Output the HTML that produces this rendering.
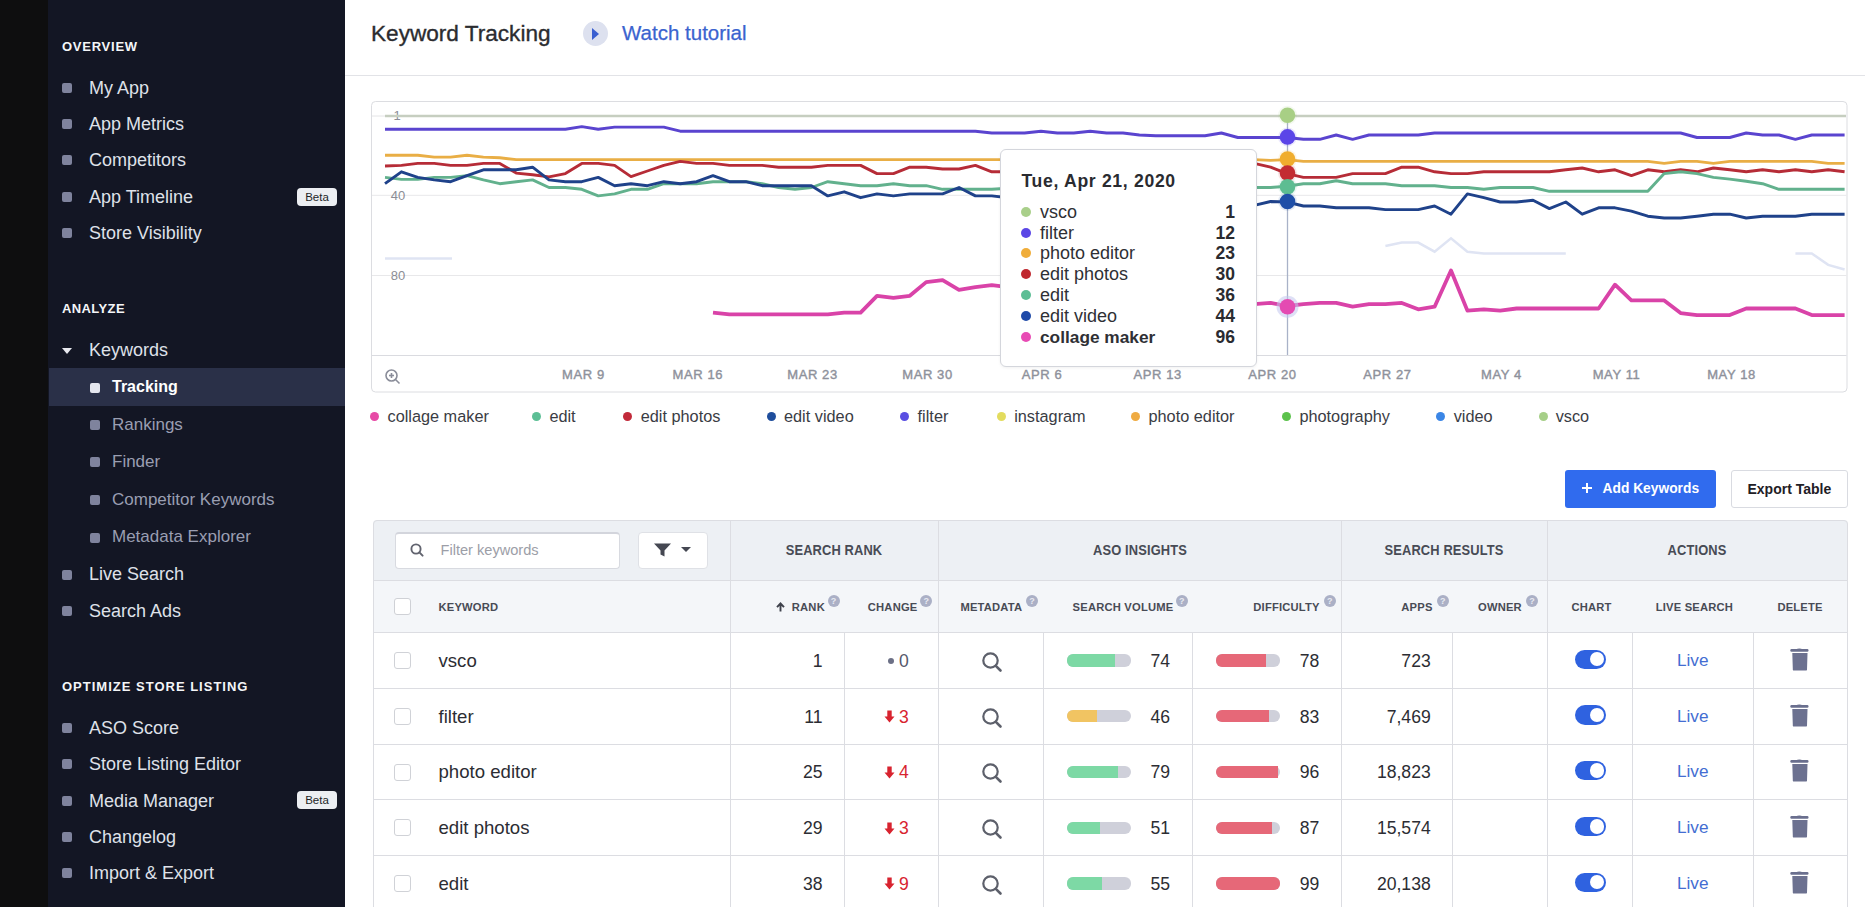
<!DOCTYPE html>
<html><head><meta charset="utf-8">
<style>
*{box-sizing:border-box;margin:0;padding:0}
html,body{width:1865px;height:907px;overflow:hidden;background:#fff;font-family:"Liberation Sans",sans-serif;position:relative}
.a{position:absolute;white-space:nowrap}
.sb0{left:0;top:0;width:48px;height:907px;background:#0e0e0f}
.sb{left:48px;top:0;width:297px;height:907px;background:#131624}
.sh{left:62px;font-weight:bold;font-size:13px;letter-spacing:0.75px;color:#f4f5f8;height:20px;line-height:20px}
.it{left:89px;font-size:18px;color:#dfe1e9;height:24px;line-height:24px}
.sub{left:112px;font-size:17px;color:#9a9eb2;height:24px;line-height:24px}
.bul{width:10px;height:10px;background:#7f839d;border-radius:2px}
.beta{left:297px;width:40px;height:18px;background:#eceef2;border-radius:4px;font-size:11.5px;color:#1d1f27;text-align:center;line-height:18px}
</style></head><body>
<div class="a sb0"></div>
<div class="a sb"></div>
<!-- sidebar -->
<div class="a sh" style="top:37px">OVERVIEW</div>
<div class="a bul" style="left:62px;top:83px"></div><div class="a it" style="top:76px">My App</div>
<div class="a bul" style="left:62px;top:119px"></div><div class="a it" style="top:112px">App Metrics</div>
<div class="a bul" style="left:62px;top:155px"></div><div class="a it" style="top:148px">Competitors</div>
<div class="a bul" style="left:62px;top:192px"></div><div class="a it" style="top:185px">App Timeline</div>
<div class="a beta" style="top:188px">Beta</div>
<div class="a bul" style="left:62px;top:228px"></div><div class="a it" style="top:221px">Store Visibility</div>

<div class="a sh" style="top:299px;letter-spacing:0.4px">ANALYZE</div>
<div class="a" style="left:62px;top:348px;width:0;height:0;border-left:5.5px solid transparent;border-right:5.5px solid transparent;border-top:6.5px solid #e8e9ef"></div>
<div class="a it" style="top:338px">Keywords</div>
<div class="a" style="left:49px;top:368px;width:296px;height:38px;background:#2a3048"></div>
<div class="a bul" style="left:90px;top:383px;background:#e4e6ee"></div><div class="a sub" style="top:375px;color:#fff;font-weight:bold;font-size:16px">Tracking</div>
<div class="a bul" style="left:90px;top:420px"></div><div class="a sub" style="top:413px">Rankings</div>
<div class="a bul" style="left:90px;top:457px"></div><div class="a sub" style="top:450px">Finder</div>
<div class="a bul" style="left:90px;top:495px"></div><div class="a sub" style="top:488px">Competitor Keywords</div>
<div class="a bul" style="left:90px;top:533px"></div><div class="a sub" style="top:525px">Metadata Explorer</div>
<div class="a bul" style="left:62px;top:570px"></div><div class="a it" style="top:562px">Live Search</div>
<div class="a bul" style="left:62px;top:606px"></div><div class="a it" style="top:599px">Search Ads</div>

<div class="a sh" style="top:677px;letter-spacing:1.0px">OPTIMIZE STORE LISTING</div>
<div class="a bul" style="left:62px;top:723px"></div><div class="a it" style="top:716px">ASO Score</div>
<div class="a bul" style="left:62px;top:759px"></div><div class="a it" style="top:752px">Store Listing Editor</div>
<div class="a bul" style="left:62px;top:796px"></div><div class="a it" style="top:789px">Media Manager</div>
<div class="a beta" style="top:791px">Beta</div>
<div class="a bul" style="left:62px;top:832px"></div><div class="a it" style="top:825px">Changelog</div>
<div class="a bul" style="left:62px;top:868px"></div><div class="a it" style="top:861px">Import &amp; Export</div>

<!-- header -->
<div class="a" style="left:371px;top:19px;height:30px;line-height:30px;font-size:22.6px;color:#2b2c30;-webkit-text-stroke:0.35px #2b2c30">Keyword Tracking</div>
<div class="a" style="left:582.5px;top:21px;width:25px;height:25px;border-radius:50%;background:#dde1ef"></div>
<div class="a" style="left:592px;top:28px;width:0;height:0;border-top:6px solid transparent;border-bottom:6px solid transparent;border-left:7px solid #3a5fd0"></div>
<div class="a" style="left:622px;top:18px;height:30px;line-height:30px;font-size:20.5px;color:#3a63cf;-webkit-text-stroke:0.25px #3a63cf">Watch tutorial</div>
<div class="a" style="left:345px;top:75px;width:1520px;height:1px;background:#e2e3e7"></div>

<svg width="1865" height="907" style="position:absolute;left:0;top:0">
<rect x="371.5" y="101.5" width="1475.5" height="290.5" rx="4" fill="#fff" stroke="#dcdde1" stroke-width="1"/>
<line x1="372" x2="1846.5" y1="195.3" y2="195.3" stroke="#e8e8ea" stroke-width="1"/>
<line x1="372" x2="1846.5" y1="275.5" y2="275.5" stroke="#e8e8ea" stroke-width="1"/>
<line x1="372" x2="1846.5" y1="355.5" y2="355.5" stroke="#dadbe0" stroke-width="1"/>
<g font-family="Liberation Sans, sans-serif" font-size="13" fill="#8b8d95">
<text x="397" y="120" text-anchor="middle">1</text>
<text x="398" y="200" text-anchor="middle">40</text>
<text x="398" y="280" text-anchor="middle">80</text>
</g>
<g font-family="Liberation Sans, sans-serif" font-size="13" fill="#8e919b" stroke="#8e919b" stroke-width="0.4" text-anchor="middle" letter-spacing="0.6">
<text x="583.4" y="379">MAR 9</text>
<text x="697.9" y="379">MAR 16</text>
<text x="812.5" y="379">MAR 23</text>
<text x="927.5" y="379">MAR 30</text>
<text x="1042" y="379">APR 6</text>
<text x="1157.7" y="379">APR 13</text>
<text x="1272.5" y="379">APR 20</text>
<text x="1387.5" y="379">APR 27</text>
<text x="1501.5" y="379">MAY 4</text>
<text x="1616.5" y="379">MAY 11</text>
<text x="1731.5" y="379">MAY 18</text>
</g>
<g stroke="#8a8d99" stroke-width="1.6" fill="none"><circle cx="391.5" cy="375.5" r="5.5"/><line x1="395.5" y1="379.5" x2="399.5" y2="383.5"/><line x1="389" y1="375.5" x2="394" y2="375.5"/><line x1="391.5" y1="373" x2="391.5" y2="378"/></g>
<line x1="385" x2="1846" y1="116" y2="116" stroke="#c6cec0" stroke-width="2.3"/><line x1="372" x2="385" y1="116" y2="116" stroke="#e4e4e6" stroke-width="1"/>
<path d="M385 258.5 L452 258.5" stroke="#dfe4f3" stroke-width="2.5" fill="none"/>
<path d="M1385.4 245.9 L1401.8 242.6 L1418.2 242.6 L1434.6 251.7 L1451.0 238.3 L1467.4 251.7 L1483.8 253.5 L1500.2 253.5 L1516.6 253.5 L1533.0 253.5 L1549.4 253.5 L1565.8 253.5" stroke="#dfe4f3" stroke-width="2.5" fill="none"/>
<path d="M1795.4 253.5 L1811.8 253.5 L1828.2 264.9 L1844.6 269.5" stroke="#dfe4f3" stroke-width="2.5" fill="none"/>
<path d="M385.0 129.2 L401.4 129.2 L417.8 129.2 L434.2 129.2 L450.6 129.2 L467.0 129.2 L483.4 129.2 L499.8 129.2 L516.2 129.2 L532.6 129.2 L549.0 129.2 L565.4 129.2 L581.8 126.6 L598.2 129.2 L614.6 127.1 L631.0 127.1 L647.4 127.1 L663.8 127.1 L680.2 131.2 L696.6 131.2 L713.0 131.2 L729.4 131.2 L745.8 131.2 L762.2 131.2 L778.6 131.2 L795.0 131.2 L811.4 131.2 L827.8 131.2 L844.2 131.2 L860.6 131.2 L877.0 131.2 L893.4 131.2 L909.8 131.2 L926.2 131.2 L942.6 131.2 L959.0 131.2 L975.4 131.2 L991.8 133.0 L1008.2 133.0 L1024.6 133.0 L1041.0 131.2 L1057.4 133.0 L1073.8 133.0 L1090.2 131.2 L1106.6 133.0 L1123.0 133.0 L1139.4 135.0 L1155.8 135.7 L1172.2 135.7 L1188.6 135.7 L1205.0 135.7 L1221.4 133.0 L1237.8 137.5 L1254.2 137.5 L1270.6 137.5 L1287.0 137.5 L1303.4 139.3 L1319.8 139.3 L1336.2 135.0 L1352.6 139.3 L1369.0 135.0 L1385.4 135.0 L1401.8 135.0 L1418.2 135.0 L1434.6 133.0 L1451.0 133.0 L1467.4 133.0 L1483.8 133.0 L1500.2 133.0 L1516.6 133.0 L1533.0 133.0 L1549.4 133.0 L1565.8 133.0 L1582.2 133.0 L1598.6 133.0 L1615.0 133.0 L1631.4 133.0 L1647.8 133.0 L1664.2 133.0 L1680.6 133.0 L1697.0 137.5 L1713.4 137.5 L1729.8 137.5 L1746.2 133.0 L1762.6 135.0 L1779.0 135.0 L1795.4 139.3 L1811.8 135.0 L1828.2 135.0 L1844.6 135.0" stroke="#5a44cf" stroke-width="2.9" fill="none" stroke-linejoin="round"/>
<path d="M385.0 155.3 L401.4 155.3 L417.8 155.3 L434.2 157.1 L450.6 157.1 L467.0 155.3 L483.4 157.1 L499.8 157.8 L516.2 159.6 L532.6 159.6 L549.0 159.6 L565.4 159.6 L581.8 159.6 L598.2 159.6 L614.6 159.6 L631.0 159.6 L647.4 159.6 L663.8 159.6 L680.2 159.6 L696.6 159.6 L713.0 159.6 L729.4 159.6 L745.8 159.6 L762.2 159.6 L778.6 159.6 L795.0 159.6 L811.4 159.6 L827.8 159.6 L844.2 159.6 L860.6 159.6 L877.0 159.6 L893.4 159.6 L909.8 159.6 L926.2 159.6 L942.6 159.6 L959.0 159.6 L975.4 159.6 L991.8 159.6 L1008.2 159.6 L1024.6 159.6 L1041.0 159.6 L1057.4 159.6 L1073.8 159.6 L1090.2 159.6 L1106.6 159.6 L1123.0 159.6 L1139.4 159.6 L1155.8 159.6 L1172.2 159.6 L1188.6 159.6 L1205.0 159.6 L1221.4 159.6 L1237.8 159.6 L1254.2 159.6 L1270.6 160.4 L1287.0 159.6 L1303.4 161.4 L1319.8 161.4 L1336.2 161.4 L1352.6 161.4 L1369.0 161.4 L1385.4 161.4 L1401.8 161.4 L1418.2 161.4 L1434.6 161.4 L1451.0 161.4 L1467.4 161.4 L1483.8 161.4 L1500.2 161.4 L1516.6 161.4 L1533.0 161.4 L1549.4 161.4 L1565.8 161.4 L1582.2 161.4 L1598.6 161.4 L1615.0 161.4 L1631.4 161.4 L1647.8 161.4 L1664.2 163.4 L1680.6 161.4 L1697.0 161.4 L1713.4 163.4 L1729.8 161.4 L1746.2 161.4 L1762.6 161.4 L1779.0 161.4 L1795.4 161.4 L1811.8 161.4 L1828.2 163.4 L1844.6 163.4" stroke="#e9ae45" stroke-width="2.9" fill="none" stroke-linejoin="round"/>
<path d="M385.0 166.0 L401.4 165.4 L417.8 163.4 L434.2 163.4 L450.6 165.4 L467.0 165.4 L483.4 163.4 L499.8 163.4 L516.2 173.1 L532.6 174.8 L549.0 176.9 L565.4 173.6 L581.8 163.4 L598.2 163.4 L614.6 165.4 L631.0 176.6 L647.4 171.0 L663.8 165.4 L680.2 161.4 L696.6 163.4 L713.0 163.4 L729.4 165.4 L745.8 165.4 L762.2 165.4 L778.6 167.2 L795.0 167.2 L811.4 167.2 L827.8 165.4 L844.2 165.4 L860.6 165.4 L877.0 173.6 L893.4 173.6 L909.8 167.2 L926.2 167.2 L942.6 169.0 L959.0 169.0 L975.4 165.4 L991.8 171.8 L1008.2 171.8 L1024.6 171.8 L1041.0 171.8 L1057.4 171.8 L1073.8 171.8 L1090.2 171.8 L1106.6 171.8 L1123.0 171.8 L1139.4 171.8 L1155.8 171.8 L1172.2 171.8 L1188.6 171.8 L1205.0 171.8 L1221.4 171.8 L1237.8 171.8 L1254.2 163.4 L1270.6 167.2 L1287.0 173.6 L1303.4 177.4 L1319.8 177.4 L1336.2 177.4 L1352.6 173.6 L1369.0 173.6 L1385.4 173.6 L1401.8 167.2 L1418.2 167.2 L1434.6 171.8 L1451.0 173.6 L1467.4 173.6 L1483.8 171.8 L1500.2 171.8 L1516.6 171.8 L1533.0 171.8 L1549.4 171.8 L1565.8 169.8 L1582.2 168.0 L1598.6 171.8 L1615.0 169.8 L1631.4 175.6 L1647.8 169.8 L1664.2 171.8 L1680.6 169.8 L1697.0 171.8 L1713.4 168.0 L1729.8 169.8 L1746.2 171.8 L1762.6 169.8 L1779.0 171.8 L1795.4 169.8 L1811.8 171.8 L1828.2 169.8 L1844.6 171.8" stroke="#b62c37" stroke-width="2.9" fill="none" stroke-linejoin="round"/>
<path d="M385.0 177.4 L401.4 179.4 L417.8 179.4 L434.2 177.4 L450.6 177.4 L467.0 175.6 L483.4 179.9 L499.8 183.7 L516.2 181.7 L532.6 179.9 L549.0 187.5 L565.4 187.5 L581.8 189.3 L598.2 195.9 L614.6 193.9 L631.0 189.3 L647.4 189.3 L663.8 183.7 L680.2 183.7 L696.6 183.7 L713.0 181.7 L729.4 181.7 L745.8 181.7 L762.2 183.7 L778.6 187.5 L795.0 189.3 L811.4 187.5 L827.8 181.7 L844.2 183.7 L860.6 185.7 L877.0 185.7 L893.4 183.7 L909.8 185.7 L926.2 185.7 L942.6 189.3 L959.0 189.3 L975.4 189.3 L991.8 189.3 L1008.2 188.3 L1024.6 188.3 L1041.0 188.3 L1057.4 188.3 L1073.8 188.3 L1090.2 188.3 L1106.6 188.3 L1123.0 188.3 L1139.4 188.3 L1155.8 188.3 L1172.2 188.3 L1188.6 188.3 L1205.0 188.3 L1221.4 188.3 L1237.8 188.3 L1254.2 187.5 L1270.6 187.5 L1287.0 186.3 L1303.4 183.7 L1319.8 183.7 L1336.2 180.7 L1352.6 183.7 L1369.0 183.7 L1385.4 183.7 L1401.8 185.7 L1418.2 185.7 L1434.6 185.7 L1451.0 187.5 L1467.4 187.5 L1483.8 189.3 L1500.2 187.5 L1516.6 187.5 L1533.0 187.5 L1549.4 191.3 L1565.8 191.3 L1582.2 191.3 L1598.6 191.3 L1615.0 191.3 L1631.4 191.3 L1647.8 191.3 L1664.2 173.6 L1680.6 171.8 L1697.0 173.6 L1713.4 177.4 L1729.8 179.1 L1746.2 181.2 L1762.6 183.7 L1779.0 189.3 L1795.4 189.3 L1811.8 189.3 L1828.2 189.3 L1844.6 189.3" stroke="#62b18d" stroke-width="2.9" fill="none" stroke-linejoin="round"/>
<path d="M385.0 183.7 L401.4 171.8 L417.8 177.4 L434.2 179.9 L450.6 181.7 L467.0 175.6 L483.4 169.8 L499.8 169.8 L516.2 169.8 L532.6 167.2 L549.0 179.9 L565.4 181.7 L581.8 181.7 L598.2 177.4 L614.6 185.7 L631.0 183.7 L647.4 185.7 L663.8 181.7 L680.2 183.7 L696.6 181.7 L713.0 175.6 L729.4 181.7 L745.8 181.7 L762.2 185.7 L778.6 185.7 L795.0 185.7 L811.4 185.7 L827.8 195.9 L844.2 191.8 L860.6 197.7 L877.0 193.9 L893.4 195.9 L909.8 193.9 L926.2 193.9 L942.6 193.9 L959.0 187.5 L975.4 195.9 L991.8 195.9 L1008.2 197.7 L1024.6 201.5 L1041.0 201.5 L1057.4 201.5 L1073.8 201.5 L1090.2 201.5 L1106.6 201.5 L1123.0 201.5 L1139.4 201.5 L1155.8 201.5 L1172.2 201.5 L1188.6 201.5 L1205.0 201.5 L1221.4 201.5 L1237.8 201.5 L1254.2 205.3 L1270.6 201.5 L1287.0 202.0 L1303.4 206.0 L1319.8 206.0 L1336.2 207.8 L1352.6 207.8 L1369.0 207.8 L1385.4 209.6 L1401.8 209.6 L1418.2 209.6 L1434.6 206.0 L1451.0 214.2 L1467.4 193.9 L1483.8 197.7 L1500.2 202.0 L1516.6 202.0 L1533.0 200.2 L1549.4 208.6 L1565.8 202.0 L1582.2 214.2 L1598.6 207.8 L1615.0 207.8 L1631.4 211.1 L1647.8 216.2 L1664.2 218.0 L1680.6 218.0 L1697.0 216.2 L1713.4 214.2 L1729.8 214.2 L1746.2 218.0 L1762.6 216.2 L1779.0 216.2 L1795.4 216.2 L1811.8 214.2 L1828.2 214.2 L1844.6 214.2" stroke="#1f428a" stroke-width="2.9" fill="none" stroke-linejoin="round"/>
<path d="M713.0 312.6 L729.4 314.4 L745.8 314.4 L762.2 314.4 L778.6 314.4 L795.0 314.4 L811.4 314.4 L827.8 314.4 L844.2 312.6 L860.6 312.6 L877.0 295.8 L893.4 297.9 L909.8 295.8 L926.2 282.1 L942.6 280.1 L959.0 289.8 L975.4 287.2 L991.8 285.2 L1008.2 287.2 L1024.6 302.9 L1041.0 302.9 L1057.4 302.9 L1073.8 302.9 L1090.2 302.9 L1106.6 302.9 L1123.0 302.9 L1139.4 302.9 L1155.8 302.9 L1172.2 302.9 L1188.6 302.9 L1205.0 302.9 L1221.4 302.9 L1237.8 302.9 L1254.2 304.2 L1270.6 302.9 L1287.0 306.0 L1303.4 304.2 L1319.8 302.9 L1336.2 302.9 L1352.6 306.7 L1369.0 304.2 L1385.4 304.2 L1401.8 302.9 L1418.2 309.3 L1434.6 306.7 L1451.0 270.5 L1467.4 310.6 L1483.8 309.3 L1500.2 310.6 L1516.6 308.5 L1533.0 308.5 L1549.4 308.5 L1565.8 308.5 L1582.2 308.5 L1598.6 308.5 L1615.0 284.7 L1631.4 300.4 L1647.8 300.4 L1664.2 300.4 L1680.6 313.1 L1697.0 315.1 L1713.4 315.1 L1729.8 315.1 L1746.2 308.5 L1762.6 308.5 L1779.0 308.5 L1795.4 308.5 L1811.8 315.1 L1828.2 315.1 L1844.6 315.1" stroke="#d943a8" stroke-width="3.8" fill="none" stroke-linejoin="round"/>
<line x1="1287.5" x2="1287.5" y1="118" y2="355" stroke="#a9b2c8" stroke-width="1.3"/>
<circle cx="1287.5" cy="115.2" r="9.5" fill="#a8cf85" opacity="0.12"/>
<circle cx="1287.5" cy="136.9" r="9.5" fill="#5b45e8" opacity="0.12"/>
<circle cx="1287.5" cy="159" r="9.5" fill="#f0ad2e" opacity="0.12"/>
<circle cx="1287.5" cy="173" r="9.5" fill="#c32c32" opacity="0.12"/>
<circle cx="1287.5" cy="186.8" r="9.5" fill="#5dbd92" opacity="0.12"/>
<circle cx="1287.5" cy="201.5" r="9.5" fill="#1f4fa8" opacity="0.12"/>
<circle cx="1287.5" cy="306.8" r="11" fill="#c3c6ee" opacity="0.55"/>
<circle cx="1287.5" cy="115.2" r="7.8" fill="#a8cf85"/>
<circle cx="1287.5" cy="136.9" r="7.8" fill="#5b45e8"/>
<circle cx="1287.5" cy="159" r="7.8" fill="#f0ad2e"/>
<circle cx="1287.5" cy="173" r="7.8" fill="#c32c32"/>
<circle cx="1287.5" cy="186.8" r="7.8" fill="#5dbd92"/>
<circle cx="1287.5" cy="201.5" r="7.8" fill="#1f4fa8"/>
<circle cx="1287.5" cy="306.8" r="7.8" fill="#e44bb2"/>
</svg>
<div class="a" style="left:999.5px;top:148.5px;width:257px;height:218px;background:#fff;border:1px solid #d4d6dc;border-radius:6px;box-shadow:0 1px 3px rgba(0,0,0,0.06)"></div>
<div class="a" style="left:1021.5px;top:166.0px;height:30px;line-height:30px;font-size:17.6px;color:#2a2b30;font-weight:bold;letter-spacing:0.68px">Tue, Apr 21, 2020</div>
<div class="a" style="left:1020.8px;top:206.7px;width:10px;height:10px;background:#a9cf8a;border-radius:50%"></div>
<div class="a" style="left:1040px;top:196.7px;height:30px;line-height:30px;font-size:18px;color:#2f3035;font-weight:normal;">vsco</div>
<div class="a" style="right:630.0px;top:196.7px;height:30px;line-height:30px;font-size:17.5px;color:#2a2b30;font-weight:bold;">1</div>
<div class="a" style="left:1020.8px;top:227.5px;width:10px;height:10px;background:#5b47e6;border-radius:50%"></div>
<div class="a" style="left:1040px;top:217.5px;height:30px;line-height:30px;font-size:18px;color:#2f3035;font-weight:normal;">filter</div>
<div class="a" style="right:630.0px;top:217.5px;height:30px;line-height:30px;font-size:17.5px;color:#2a2b30;font-weight:bold;">12</div>
<div class="a" style="left:1020.8px;top:248.29999999999998px;width:10px;height:10px;background:#f0ad3a;border-radius:50%"></div>
<div class="a" style="left:1040px;top:238.3px;height:30px;line-height:30px;font-size:18px;color:#2f3035;font-weight:normal;">photo editor</div>
<div class="a" style="right:630.0px;top:238.3px;height:30px;line-height:30px;font-size:17.5px;color:#2a2b30;font-weight:bold;">23</div>
<div class="a" style="left:1020.8px;top:269.1px;width:10px;height:10px;background:#c0282f;border-radius:50%"></div>
<div class="a" style="left:1040px;top:259.1px;height:30px;line-height:30px;font-size:18px;color:#2f3035;font-weight:normal;">edit photos</div>
<div class="a" style="right:630.0px;top:259.1px;height:30px;line-height:30px;font-size:17.5px;color:#2a2b30;font-weight:bold;">30</div>
<div class="a" style="left:1020.8px;top:289.9px;width:10px;height:10px;background:#5cbe95;border-radius:50%"></div>
<div class="a" style="left:1040px;top:279.9px;height:30px;line-height:30px;font-size:18px;color:#2f3035;font-weight:normal;">edit</div>
<div class="a" style="right:630.0px;top:279.9px;height:30px;line-height:30px;font-size:17.5px;color:#2a2b30;font-weight:bold;">36</div>
<div class="a" style="left:1020.8px;top:310.7px;width:10px;height:10px;background:#1f4aa8;border-radius:50%"></div>
<div class="a" style="left:1040px;top:300.7px;height:30px;line-height:30px;font-size:18px;color:#2f3035;font-weight:normal;">edit video</div>
<div class="a" style="right:630.0px;top:300.7px;height:30px;line-height:30px;font-size:17.5px;color:#2a2b30;font-weight:bold;">44</div>
<div class="a" style="left:1020.8px;top:331.5px;width:10px;height:10px;background:#e84bb4;border-radius:50%"></div>
<div class="a" style="left:1040px;top:321.5px;height:30px;line-height:30px;font-size:17.3px;color:#2f3035;font-weight:bold;">collage maker</div>
<div class="a" style="right:630.0px;top:321.5px;height:30px;line-height:30px;font-size:17.5px;color:#2a2b30;font-weight:bold;">96</div>
<div class="a" style="left:370.3px;top:412.0px;width:9px;height:9px;background:#e74aa6;border-radius:50%"></div>
<div class="a" style="left:387.5px;top:401.0px;height:30px;line-height:30px;font-size:16.3px;color:#3a3c44;font-weight:normal;">collage maker</div>
<div class="a" style="left:532.2px;top:412.0px;width:9px;height:9px;background:#5cbf95;border-radius:50%"></div>
<div class="a" style="left:549.4px;top:401.0px;height:30px;line-height:30px;font-size:16.3px;color:#3a3c44;font-weight:normal;">edit</div>
<div class="a" style="left:623.2px;top:412.0px;width:9px;height:9px;background:#c22a3a;border-radius:50%"></div>
<div class="a" style="left:640.7px;top:401.0px;height:30px;line-height:30px;font-size:16.3px;color:#3a3c44;font-weight:normal;">edit photos</div>
<div class="a" style="left:766.6px;top:412.0px;width:9px;height:9px;background:#1f4e9c;border-radius:50%"></div>
<div class="a" style="left:784px;top:401.0px;height:30px;line-height:30px;font-size:16.3px;color:#3a3c44;font-weight:normal;">edit video</div>
<div class="a" style="left:900.1px;top:412.0px;width:9px;height:9px;background:#5a4fe2;border-radius:50%"></div>
<div class="a" style="left:917.6px;top:401.0px;height:30px;line-height:30px;font-size:16.3px;color:#3a3c44;font-weight:normal;">filter</div>
<div class="a" style="left:996.9px;top:412.0px;width:9px;height:9px;background:#e3dc5e;border-radius:50%"></div>
<div class="a" style="left:1014.2px;top:401.0px;height:30px;line-height:30px;font-size:16.3px;color:#3a3c44;font-weight:normal;">instagram</div>
<div class="a" style="left:1130.7px;top:412.0px;width:9px;height:9px;background:#efab42;border-radius:50%"></div>
<div class="a" style="left:1148.5px;top:401.0px;height:30px;line-height:30px;font-size:16.3px;color:#3a3c44;font-weight:normal;">photo editor</div>
<div class="a" style="left:1281.6px;top:412.0px;width:9px;height:9px;background:#5cc24c;border-radius:50%"></div>
<div class="a" style="left:1299.4px;top:401.0px;height:30px;line-height:30px;font-size:16.3px;color:#3a3c44;font-weight:normal;">photography</div>
<div class="a" style="left:1435.9px;top:412.0px;width:9px;height:9px;background:#3b86e6;border-radius:50%"></div>
<div class="a" style="left:1453.7px;top:401.0px;height:30px;line-height:30px;font-size:16.3px;color:#3a3c44;font-weight:normal;">video</div>
<div class="a" style="left:1538.9px;top:412.0px;width:9px;height:9px;background:#a6cf88;border-radius:50%"></div>
<div class="a" style="left:1555.7px;top:401.0px;height:30px;line-height:30px;font-size:16.3px;color:#3a3c44;font-weight:normal;">vsco</div>
<div class="a" style="left:1565px;top:469.5px;width:150.5px;height:38.5px;background:#306bee;border-radius:3px"></div>
<svg class="a" style="left:1581px;top:482px" width="12" height="12"><path d="M6 1V11M1 6H11" stroke="#fff" stroke-width="2"/></svg>
<div class="a" style="left:1602.5px;top:474.0px;height:30px;line-height:30px;font-size:13.8px;color:#fff;font-weight:bold;">Add Keywords</div>
<div class="a" style="left:1731px;top:469.5px;width:116.5px;height:38.5px;background:#fff;border:1px solid #d9dbe1;border-radius:3px"></div>
<div class="a" style="left:1747.5px;top:474.0px;height:30px;line-height:30px;font-size:14px;color:#1f2026;font-weight:bold;">Export Table</div>
<div class="a" style="left:372.5px;top:519.5px;width:1475.0px;height:61.299999999999955px;background:#edf0f4;border-top-left-radius:4px;border-top-right-radius:4px"></div>
<div class="a" style="left:372.5px;top:580.8px;width:1475.0px;height:51.700000000000045px;background:#f4f6f9"></div>
<div class="a" style="left:372.5px;top:519.5px;width:1475.0px;height:392.5px;border:1px solid #dcdde2;border-radius:4px"></div>
<div class="a" style="left:372.5px;top:580.3px;width:1475.0px;height:1px;background:#dcdde2"></div>
<div class="a" style="left:372.5px;top:632.0px;width:1475.0px;height:1px;background:#dcdde2"></div>
<div class="a" style="left:372.5px;top:687.75px;width:1475.0px;height:1px;background:#dcdde2"></div>
<div class="a" style="left:372.5px;top:743.5px;width:1475.0px;height:1px;background:#dcdde2"></div>
<div class="a" style="left:372.5px;top:799.25px;width:1475.0px;height:1px;background:#dcdde2"></div>
<div class="a" style="left:372.5px;top:855.0px;width:1475.0px;height:1px;background:#dcdde2"></div>
<div class="a" style="left:729.7px;top:519.5px;width:1px;height:387.5px;background:#dcdde2"></div>
<div class="a" style="left:937.8px;top:519.5px;width:1px;height:387.5px;background:#dcdde2"></div>
<div class="a" style="left:1340.6px;top:519.5px;width:1px;height:387.5px;background:#dcdde2"></div>
<div class="a" style="left:1547.2px;top:519.5px;width:1px;height:387.5px;background:#dcdde2"></div>
<div class="a" style="left:843.5px;top:632.5px;width:1px;height:274.5px;background:#dcdde2"></div>
<div class="a" style="left:1042.8px;top:632.5px;width:1px;height:274.5px;background:#dcdde2"></div>
<div class="a" style="left:1192.0px;top:632.5px;width:1px;height:274.5px;background:#dcdde2"></div>
<div class="a" style="left:1452.1px;top:632.5px;width:1px;height:274.5px;background:#dcdde2"></div>
<div class="a" style="left:1632.4px;top:632.5px;width:1px;height:274.5px;background:#dcdde2"></div>
<div class="a" style="left:1752.5px;top:632.5px;width:1px;height:274.5px;background:#dcdde2"></div>
<div class="a" style="left:394.8px;top:531.5px;width:225.5px;height:37px;background:#fff;border:1px solid #d8dae0;border-top:2px solid #d3d5dc;border-radius:4px"></div>
<svg class="a" style="left:410px;top:543px" width="15" height="15"><circle cx="6" cy="6" r="4.6" stroke="#62646f" stroke-width="1.9" fill="none"/><path d="M9.4 9.4L12.6 12.6" stroke="#62646f" stroke-width="2" stroke-linecap="round"/></svg>
<div class="a" style="left:440.5px;top:535.0px;height:30px;line-height:30px;font-size:14.6px;color:#9c9ea7;font-weight:normal;">Filter keywords</div>
<div class="a" style="left:637.5px;top:531.5px;width:70.5px;height:37px;background:#fff;border:1px solid #dfe1e6;border-radius:4px"></div>
<svg class="a" style="left:653px;top:542px" width="42" height="16"><path d="M1 1.5H18L11.5 8.5V14.5L7.5 12.5V8.5Z" fill="#454852"/><path d="M28 5H38L33 10Z" fill="#454852"/></svg>
<div class="a" style="left:684.0px;width:300px;text-align:center;top:535.4px;height:30px;line-height:30px;font-size:14.8px;color:#484b55;font-weight:bold;letter-spacing:0.15px;transform:scaleX(0.87)">SEARCH RANK</div>
<div class="a" style="left:989.5px;width:300px;text-align:center;top:535.4px;height:30px;line-height:30px;font-size:14.8px;color:#484b55;font-weight:bold;letter-spacing:0.15px;transform:scaleX(0.87)">ASO INSIGHTS</div>
<div class="a" style="left:1294.4px;width:300px;text-align:center;top:535.4px;height:30px;line-height:30px;font-size:14.8px;color:#484b55;font-weight:bold;letter-spacing:0.15px;transform:scaleX(0.87)">SEARCH RESULTS</div>
<div class="a" style="left:1547.0px;width:300px;text-align:center;top:535.4px;height:30px;line-height:30px;font-size:14.8px;color:#484b55;font-weight:bold;letter-spacing:0.15px;transform:scaleX(0.87)">ACTIONS</div>
<div class="a" style="left:394.2px;top:598px;width:17px;height:17px;background:#fff;border:1.5px solid #cfd1d6;border-radius:3px"></div>
<div class="a" style="left:438.5px;top:591.8px;height:30px;line-height:30px;font-size:11.2px;color:#484b55;font-weight:bold;letter-spacing:0.2px">KEYWORD</div>
<div class="a" style="left:791.8px;top:591.8px;height:30px;line-height:30px;font-size:11.2px;color:#484b55;font-weight:bold;letter-spacing:0.2px">RANK</div>
<div class="a" style="left:867.8px;top:591.8px;height:30px;line-height:30px;font-size:11.2px;color:#484b55;font-weight:bold;letter-spacing:0.2px">CHANGE</div>
<div class="a" style="left:960.4px;top:591.8px;height:30px;line-height:30px;font-size:11.2px;color:#484b55;font-weight:bold;letter-spacing:0.2px">METADATA</div>
<div class="a" style="left:1072.6px;top:591.8px;height:30px;line-height:30px;font-size:11.2px;color:#484b55;font-weight:bold;letter-spacing:0.2px">SEARCH VOLUME</div>
<div class="a" style="left:1253.3px;top:591.8px;height:30px;line-height:30px;font-size:11.2px;color:#484b55;font-weight:bold;letter-spacing:0.2px">DIFFICULTY</div>
<div class="a" style="left:1401.3px;top:591.8px;height:30px;line-height:30px;font-size:11.2px;color:#484b55;font-weight:bold;letter-spacing:0.2px">APPS</div>
<div class="a" style="left:1478px;top:591.8px;height:30px;line-height:30px;font-size:11.2px;color:#484b55;font-weight:bold;letter-spacing:0.2px">OWNER</div>
<div class="a" style="left:1571.4px;top:591.8px;height:30px;line-height:30px;font-size:11.2px;color:#484b55;font-weight:bold;letter-spacing:0.2px">CHART</div>
<div class="a" style="left:1655.7px;top:591.8px;height:30px;line-height:30px;font-size:11.2px;color:#484b55;font-weight:bold;letter-spacing:0.2px">LIVE SEARCH</div>
<div class="a" style="left:1777.4px;top:591.8px;height:30px;line-height:30px;font-size:11.2px;color:#484b55;font-weight:bold;letter-spacing:0.2px">DELETE</div>
<div class="a" style="left:827.6px;top:595.0px;width:12px;height:12px;border-radius:50%;background:#abb0c6;color:#e8eaf2;font-size:9px;font-weight:bold;line-height:12px;text-align:center">?</div>
<div class="a" style="left:920.3px;top:595.0px;width:12px;height:12px;border-radius:50%;background:#abb0c6;color:#e8eaf2;font-size:9px;font-weight:bold;line-height:12px;text-align:center">?</div>
<div class="a" style="left:1026.0px;top:595.0px;width:12px;height:12px;border-radius:50%;background:#abb0c6;color:#e8eaf2;font-size:9px;font-weight:bold;line-height:12px;text-align:center">?</div>
<div class="a" style="left:1175.7px;top:595.0px;width:12px;height:12px;border-radius:50%;background:#abb0c6;color:#e8eaf2;font-size:9px;font-weight:bold;line-height:12px;text-align:center">?</div>
<div class="a" style="left:1323.7px;top:595.0px;width:12px;height:12px;border-radius:50%;background:#abb0c6;color:#e8eaf2;font-size:9px;font-weight:bold;line-height:12px;text-align:center">?</div>
<div class="a" style="left:1436.7px;top:595.0px;width:12px;height:12px;border-radius:50%;background:#abb0c6;color:#e8eaf2;font-size:9px;font-weight:bold;line-height:12px;text-align:center">?</div>
<div class="a" style="left:1525.9px;top:595.0px;width:12px;height:12px;border-radius:50%;background:#abb0c6;color:#e8eaf2;font-size:9px;font-weight:bold;line-height:12px;text-align:center">?</div>
<svg class="a" style="left:775.5px;top:601.5px" width="9" height="10"><path d="M4.5 9.6V1.8M1 5.2L4.5 1.5L8 5.2" stroke="#3f424c" stroke-width="1.9" fill="none"/></svg>
<div class="a" style="left:394.2px;top:652.2px;width:17px;height:17px;background:#fff;border:1.5px solid #d0d2d7;border-radius:3px"></div>
<div class="a" style="left:438.5px;top:645.7px;height:30px;line-height:30px;font-size:18.6px;color:#2c2d33;font-weight:normal;">vsco</div>
<div class="a" style="right:1042.5px;top:645.7px;height:30px;line-height:30px;font-size:17.6px;color:#2c2d33;font-weight:normal;">1</div>
<div class="a" style="left:887.8px;top:657.7px;width:6px;height:6px;background:#6c7086;border-radius:50%"></div>
<div class="a" style="right:956.1px;top:645.7px;height:30px;line-height:30px;font-size:17.6px;color:#55586a;font-weight:normal;">0</div>
<svg class="a" style="left:981px;top:650.7px" width="22" height="22"><circle cx="9.5" cy="9.5" r="7.2" stroke="#5d606b" stroke-width="2.2" fill="none"/><path d="M14.8 14.8L19.5 19.5" stroke="#5d606b" stroke-width="2.6" stroke-linecap="round"/></svg>
<div class="a" style="left:1067.1px;top:654.4000000000001px;width:64.2px;height:12.2px;background:#cfd0da;border-radius:6.1px;overflow:hidden"></div>
<div class="a" style="left:1067.1px;top:654.4000000000001px;width:47.508px;height:12.2px;background:#7dd9a5;border-radius:6.1px 0 0 6.1px"></div>
<div class="a" style="right:695.0px;top:645.7px;height:30px;line-height:30px;font-size:17.6px;color:#2c2d33;font-weight:normal;">74</div>
<div class="a" style="left:1216.1px;top:654.4000000000001px;width:64.2px;height:12.2px;background:#cfd0da;border-radius:6.1px"></div>
<div class="a" style="left:1216.1px;top:654.4000000000001px;width:50.076px;height:12.2px;background:#e66878;border-radius:6.1px 0 0 6.1px"></div>
<div class="a" style="right:545.7px;top:645.7px;height:30px;line-height:30px;font-size:17.6px;color:#2c2d33;font-weight:normal;">78</div>
<div class="a" style="right:434.3px;top:645.7px;height:30px;line-height:30px;font-size:17.6px;color:#2c2d33;font-weight:normal;">723</div>
<div class="a" style="left:1575.2px;top:649.5px;width:31px;height:19.4px;background:#2f62e0;border-radius:10px"></div>
<div class="a" style="left:1589.6px;top:651.9000000000001px;width:14.4px;height:14.6px;background:#fff;border-radius:50%"></div>
<div class="a" style="left:1542.7px;width:300px;text-align:center;top:644.7px;height:30px;line-height:30px;font-size:17.2px;color:#436dd2;font-weight:normal;">Live</div>
<svg class="a" style="left:1789.5px;top:646.7px" width="19" height="25"><path d="M5.5 3 Q9.3 0.2 13.2 3Z" fill="#6a6f8e"/><rect x="0.3" y="2" width="18.2" height="2.8" rx="1.2" fill="#6a6f8e"/><path d="M2.3 6H17.5L17 22.4Q16.9 23.6 15.8 23.6H4Q2.9 23.6 2.8 22.4Z" fill="#6c7190"/></svg>
<div class="a" style="left:394.2px;top:707.95px;width:17px;height:17px;background:#fff;border:1.5px solid #d0d2d7;border-radius:3px"></div>
<div class="a" style="left:438.5px;top:701.5px;height:30px;line-height:30px;font-size:18.6px;color:#2c2d33;font-weight:normal;">filter</div>
<div class="a" style="right:1042.5px;top:701.5px;height:30px;line-height:30px;font-size:17.6px;color:#2c2d33;font-weight:normal;">11</div>
<svg class="a" style="left:883.5px;top:710.0px" width="11" height="13"><path d="M3.3 0.5H7.7V6.5H10.5L5.5 12.5L0.5 6.5H3.3Z" fill="#d8232f"/></svg>
<div class="a" style="right:956.1px;top:701.5px;height:30px;line-height:30px;font-size:17.6px;color:#d8232f;font-weight:normal;">3</div>
<svg class="a" style="left:981px;top:706.5px" width="22" height="22"><circle cx="9.5" cy="9.5" r="7.2" stroke="#5d606b" stroke-width="2.2" fill="none"/><path d="M14.8 14.8L19.5 19.5" stroke="#5d606b" stroke-width="2.6" stroke-linecap="round"/></svg>
<div class="a" style="left:1067.1px;top:710.1500000000001px;width:64.2px;height:12.2px;background:#cfd0da;border-radius:6.1px;overflow:hidden"></div>
<div class="a" style="left:1067.1px;top:710.1500000000001px;width:29.532000000000004px;height:12.2px;background:#f1c462;border-radius:6.1px 0 0 6.1px"></div>
<div class="a" style="right:695.0px;top:701.5px;height:30px;line-height:30px;font-size:17.6px;color:#2c2d33;font-weight:normal;">46</div>
<div class="a" style="left:1216.1px;top:710.1500000000001px;width:64.2px;height:12.2px;background:#cfd0da;border-radius:6.1px"></div>
<div class="a" style="left:1216.1px;top:710.1500000000001px;width:53.286px;height:12.2px;background:#e66878;border-radius:6.1px 0 0 6.1px"></div>
<div class="a" style="right:545.7px;top:701.5px;height:30px;line-height:30px;font-size:17.6px;color:#2c2d33;font-weight:normal;">83</div>
<div class="a" style="right:434.3px;top:701.5px;height:30px;line-height:30px;font-size:17.6px;color:#2c2d33;font-weight:normal;">7,469</div>
<div class="a" style="left:1575.2px;top:705.25px;width:31px;height:19.4px;background:#2f62e0;border-radius:10px"></div>
<div class="a" style="left:1589.6px;top:707.6500000000001px;width:14.4px;height:14.6px;background:#fff;border-radius:50%"></div>
<div class="a" style="left:1542.7px;width:300px;text-align:center;top:700.5px;height:30px;line-height:30px;font-size:17.2px;color:#436dd2;font-weight:normal;">Live</div>
<svg class="a" style="left:1789.5px;top:702.5px" width="19" height="25"><path d="M5.5 3 Q9.3 0.2 13.2 3Z" fill="#6a6f8e"/><rect x="0.3" y="2" width="18.2" height="2.8" rx="1.2" fill="#6a6f8e"/><path d="M2.3 6H17.5L17 22.4Q16.9 23.6 15.8 23.6H4Q2.9 23.6 2.8 22.4Z" fill="#6c7190"/></svg>
<div class="a" style="left:394.2px;top:763.7px;width:17px;height:17px;background:#fff;border:1.5px solid #d0d2d7;border-radius:3px"></div>
<div class="a" style="left:438.5px;top:757.2px;height:30px;line-height:30px;font-size:18.6px;color:#2c2d33;font-weight:normal;">photo editor</div>
<div class="a" style="right:1042.5px;top:757.2px;height:30px;line-height:30px;font-size:17.6px;color:#2c2d33;font-weight:normal;">25</div>
<svg class="a" style="left:883.5px;top:765.7px" width="11" height="13"><path d="M3.3 0.5H7.7V6.5H10.5L5.5 12.5L0.5 6.5H3.3Z" fill="#d8232f"/></svg>
<div class="a" style="right:956.1px;top:757.2px;height:30px;line-height:30px;font-size:17.6px;color:#d8232f;font-weight:normal;">4</div>
<svg class="a" style="left:981px;top:762.2px" width="22" height="22"><circle cx="9.5" cy="9.5" r="7.2" stroke="#5d606b" stroke-width="2.2" fill="none"/><path d="M14.8 14.8L19.5 19.5" stroke="#5d606b" stroke-width="2.6" stroke-linecap="round"/></svg>
<div class="a" style="left:1067.1px;top:765.9000000000001px;width:64.2px;height:12.2px;background:#cfd0da;border-radius:6.1px;overflow:hidden"></div>
<div class="a" style="left:1067.1px;top:765.9000000000001px;width:50.718px;height:12.2px;background:#7dd9a5;border-radius:6.1px 0 0 6.1px"></div>
<div class="a" style="right:695.0px;top:757.2px;height:30px;line-height:30px;font-size:17.6px;color:#2c2d33;font-weight:normal;">79</div>
<div class="a" style="left:1216.1px;top:765.9000000000001px;width:64.2px;height:12.2px;background:#cfd0da;border-radius:6.1px"></div>
<div class="a" style="left:1216.1px;top:765.9000000000001px;width:61.632000000000005px;height:12.2px;background:#e66878;border-radius:6.1px 0 0 6.1px"></div>
<div class="a" style="right:545.7px;top:757.2px;height:30px;line-height:30px;font-size:17.6px;color:#2c2d33;font-weight:normal;">96</div>
<div class="a" style="right:434.3px;top:757.2px;height:30px;line-height:30px;font-size:17.6px;color:#2c2d33;font-weight:normal;">18,823</div>
<div class="a" style="left:1575.2px;top:761.0px;width:31px;height:19.4px;background:#2f62e0;border-radius:10px"></div>
<div class="a" style="left:1589.6px;top:763.4000000000001px;width:14.4px;height:14.6px;background:#fff;border-radius:50%"></div>
<div class="a" style="left:1542.7px;width:300px;text-align:center;top:756.2px;height:30px;line-height:30px;font-size:17.2px;color:#436dd2;font-weight:normal;">Live</div>
<svg class="a" style="left:1789.5px;top:758.2px" width="19" height="25"><path d="M5.5 3 Q9.3 0.2 13.2 3Z" fill="#6a6f8e"/><rect x="0.3" y="2" width="18.2" height="2.8" rx="1.2" fill="#6a6f8e"/><path d="M2.3 6H17.5L17 22.4Q16.9 23.6 15.8 23.6H4Q2.9 23.6 2.8 22.4Z" fill="#6c7190"/></svg>
<div class="a" style="left:394.2px;top:819.45px;width:17px;height:17px;background:#fff;border:1.5px solid #d0d2d7;border-radius:3px"></div>
<div class="a" style="left:438.5px;top:813.0px;height:30px;line-height:30px;font-size:18.6px;color:#2c2d33;font-weight:normal;">edit photos</div>
<div class="a" style="right:1042.5px;top:813.0px;height:30px;line-height:30px;font-size:17.6px;color:#2c2d33;font-weight:normal;">29</div>
<svg class="a" style="left:883.5px;top:821.5px" width="11" height="13"><path d="M3.3 0.5H7.7V6.5H10.5L5.5 12.5L0.5 6.5H3.3Z" fill="#d8232f"/></svg>
<div class="a" style="right:956.1px;top:813.0px;height:30px;line-height:30px;font-size:17.6px;color:#d8232f;font-weight:normal;">3</div>
<svg class="a" style="left:981px;top:818.0px" width="22" height="22"><circle cx="9.5" cy="9.5" r="7.2" stroke="#5d606b" stroke-width="2.2" fill="none"/><path d="M14.8 14.8L19.5 19.5" stroke="#5d606b" stroke-width="2.6" stroke-linecap="round"/></svg>
<div class="a" style="left:1067.1px;top:821.6500000000001px;width:64.2px;height:12.2px;background:#cfd0da;border-radius:6.1px;overflow:hidden"></div>
<div class="a" style="left:1067.1px;top:821.6500000000001px;width:32.742000000000004px;height:12.2px;background:#7dd9a5;border-radius:6.1px 0 0 6.1px"></div>
<div class="a" style="right:695.0px;top:813.0px;height:30px;line-height:30px;font-size:17.6px;color:#2c2d33;font-weight:normal;">51</div>
<div class="a" style="left:1216.1px;top:821.6500000000001px;width:64.2px;height:12.2px;background:#cfd0da;border-radius:6.1px"></div>
<div class="a" style="left:1216.1px;top:821.6500000000001px;width:55.854000000000006px;height:12.2px;background:#e66878;border-radius:6.1px 0 0 6.1px"></div>
<div class="a" style="right:545.7px;top:813.0px;height:30px;line-height:30px;font-size:17.6px;color:#2c2d33;font-weight:normal;">87</div>
<div class="a" style="right:434.3px;top:813.0px;height:30px;line-height:30px;font-size:17.6px;color:#2c2d33;font-weight:normal;">15,574</div>
<div class="a" style="left:1575.2px;top:816.75px;width:31px;height:19.4px;background:#2f62e0;border-radius:10px"></div>
<div class="a" style="left:1589.6px;top:819.1500000000001px;width:14.4px;height:14.6px;background:#fff;border-radius:50%"></div>
<div class="a" style="left:1542.7px;width:300px;text-align:center;top:812.0px;height:30px;line-height:30px;font-size:17.2px;color:#436dd2;font-weight:normal;">Live</div>
<svg class="a" style="left:1789.5px;top:814.0px" width="19" height="25"><path d="M5.5 3 Q9.3 0.2 13.2 3Z" fill="#6a6f8e"/><rect x="0.3" y="2" width="18.2" height="2.8" rx="1.2" fill="#6a6f8e"/><path d="M2.3 6H17.5L17 22.4Q16.9 23.6 15.8 23.6H4Q2.9 23.6 2.8 22.4Z" fill="#6c7190"/></svg>
<div class="a" style="left:394.2px;top:875.2px;width:17px;height:17px;background:#fff;border:1.5px solid #d0d2d7;border-radius:3px"></div>
<div class="a" style="left:438.5px;top:868.7px;height:30px;line-height:30px;font-size:18.6px;color:#2c2d33;font-weight:normal;">edit</div>
<div class="a" style="right:1042.5px;top:868.7px;height:30px;line-height:30px;font-size:17.6px;color:#2c2d33;font-weight:normal;">38</div>
<svg class="a" style="left:883.5px;top:877.2px" width="11" height="13"><path d="M3.3 0.5H7.7V6.5H10.5L5.5 12.5L0.5 6.5H3.3Z" fill="#d8232f"/></svg>
<div class="a" style="right:956.1px;top:868.7px;height:30px;line-height:30px;font-size:17.6px;color:#d8232f;font-weight:normal;">9</div>
<svg class="a" style="left:981px;top:873.7px" width="22" height="22"><circle cx="9.5" cy="9.5" r="7.2" stroke="#5d606b" stroke-width="2.2" fill="none"/><path d="M14.8 14.8L19.5 19.5" stroke="#5d606b" stroke-width="2.6" stroke-linecap="round"/></svg>
<div class="a" style="left:1067.1px;top:877.4000000000001px;width:64.2px;height:12.2px;background:#cfd0da;border-radius:6.1px;overflow:hidden"></div>
<div class="a" style="left:1067.1px;top:877.4000000000001px;width:35.31px;height:12.2px;background:#7dd9a5;border-radius:6.1px 0 0 6.1px"></div>
<div class="a" style="right:695.0px;top:868.7px;height:30px;line-height:30px;font-size:17.6px;color:#2c2d33;font-weight:normal;">55</div>
<div class="a" style="left:1216.1px;top:877.4000000000001px;width:64.2px;height:12.2px;background:#cfd0da;border-radius:6.1px"></div>
<div class="a" style="left:1216.1px;top:877.4000000000001px;width:63.558px;height:12.2px;background:#e66878;border-radius:6.1px"></div>
<div class="a" style="right:545.7px;top:868.7px;height:30px;line-height:30px;font-size:17.6px;color:#2c2d33;font-weight:normal;">99</div>
<div class="a" style="right:434.3px;top:868.7px;height:30px;line-height:30px;font-size:17.6px;color:#2c2d33;font-weight:normal;">20,138</div>
<div class="a" style="left:1575.2px;top:872.5px;width:31px;height:19.4px;background:#2f62e0;border-radius:10px"></div>
<div class="a" style="left:1589.6px;top:874.9000000000001px;width:14.4px;height:14.6px;background:#fff;border-radius:50%"></div>
<div class="a" style="left:1542.7px;width:300px;text-align:center;top:867.7px;height:30px;line-height:30px;font-size:17.2px;color:#436dd2;font-weight:normal;">Live</div>
<svg class="a" style="left:1789.5px;top:869.7px" width="19" height="25"><path d="M5.5 3 Q9.3 0.2 13.2 3Z" fill="#6a6f8e"/><rect x="0.3" y="2" width="18.2" height="2.8" rx="1.2" fill="#6a6f8e"/><path d="M2.3 6H17.5L17 22.4Q16.9 23.6 15.8 23.6H4Q2.9 23.6 2.8 22.4Z" fill="#6c7190"/></svg>

</body></html>
